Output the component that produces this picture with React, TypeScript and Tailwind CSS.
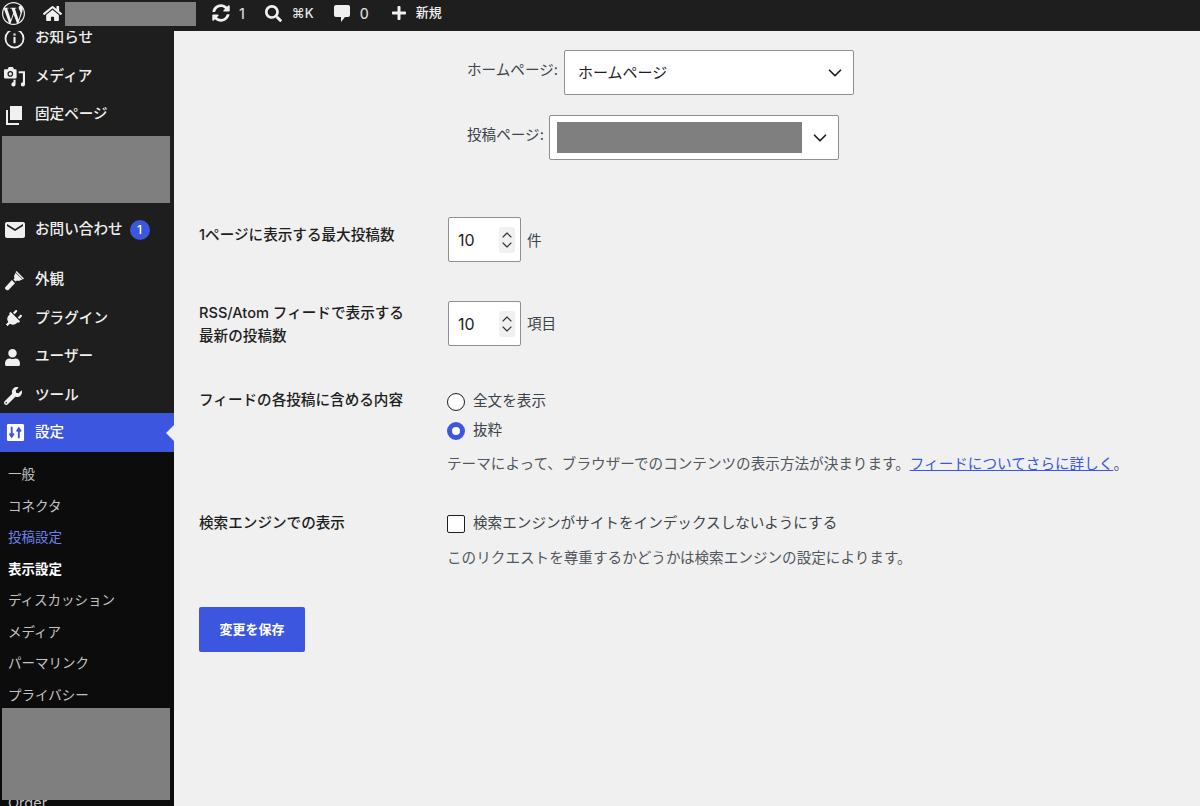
import { FC, ReactNode } from "react";
import { ChevronDown, ChevronUp } from "lucide-react";
import { FaHome, FaPlug, FaPlus, FaSearch, FaSyncAlt, FaUser, FaWrench } from "react-icons/fa";
import { MdEmail } from "react-icons/md";
import { SiWordpress } from "react-icons/si";

const font = "font-['Inter','Noto_Sans_CJK_JP',sans-serif]";

const InfoIcon = () => (
    <svg viewBox="0 0 20 20" className="w-[21px] h-[21px]" fill="none">
        <circle cx="10" cy="10" r="8.6" stroke="currentColor" strokeWidth="1.7" />
        <rect x="9" y="8.5" width="2" height="6" fill="currentColor" />
        <rect x="9" y="5.2" width="2" height="2" fill="currentColor" />
    </svg>
);

const MediaIcon = () => (
    <svg viewBox="0 0 20 20" className="w-[21px] h-[21px]" fill="currentColor">
        <path d="M1 3h2.5l1-2h4l1 2H11a1 1 0 0 1 1 1v7a1 1 0 0 1-1 1H1a1 1 0 0 1-1-1V4a1 1 0 0 1 1-1z" />
        <circle cx="6" cy="7.5" r="2.7" fill="#1e1e1e" />
        <circle cx="6" cy="7.5" r="1.5" />
        <path d="M14 5h6v12.5a2 2 0 1 1-2-2V7h-4V5z" />
        <path d="M9 13h2v4.5a2 2 0 1 1-2-2V13z" />
    </svg>
);

const PagesIcon = () => (
    <svg viewBox="0 0 20 20" className="w-[20px] h-[20px]" fill="currentColor">
        <path d="M6 1h12v14H6z" />
        <path d="M2 5h2v13h11v2H2z" />
    </svg>
);

const BrushIcon = () => (
    <svg viewBox="0 0 20 20" className="w-[21px] h-[21px]" fill="currentColor">
        <path d="M11 2.5 17.5 9l-3.5 1.5-1.5-.5-1.5 1-2-2 1-1.5-.5-1.5z" />
        <path d="M12 1l7 7-1 1-7-7z" />
        <path d="M7.5 9.5l3 3L4 19.3a1.5 1.5 0 0 1-1.2-.1L1.2 18a1.5 1.5 0 0 1-.2-1.3z" />
    </svg>
);

const SettingsIcon = () => (
    <svg viewBox="0 0 20 20" className="w-[19px] h-[19px]">
        <rect x="1" y="1" width="18" height="18" rx="1.5" fill="currentColor" />
        <path d="M6 4v9M3.8 11 6 14.5 8.2 11" stroke="#3c56e0" strokeWidth="2" fill="none" />
        <path d="M13.5 16V7M11.3 9 13.5 5.5 15.7 9" stroke="#3c56e0" strokeWidth="2" fill="none" />
    </svg>
);

const CommentIcon = () => (
    <svg viewBox="0 0 16 18" className="ml-[20px] mt-[5px] w-[16px] h-[18px]" fill="currentColor">
        <path d="M2 0h12a2 2 0 0 1 2 2v8a2 2 0 0 1-2 2h-3l-4 5v-5H2a2 2 0 0 1-2-2V2a2 2 0 0 1 2-2z" />
    </svg>
);

const Item: FC<{ icon: ReactNode; label: string; badge?: boolean }> = ({ icon, label, badge }) => (
    <div className="h-[38.5px] flex items-center text-[14.6px] font-medium text-[#f0f0f0]">
        <span className="w-[35px] pl-[4px] flex items-center shrink-0">{icon}</span>
        <span>{label}</span>
        {badge && (
            <span className="ml-[7px] w-[20px] h-[20px] rounded-full bg-[#3c56e0] text-white text-[12px] flex items-center justify-center">
                1
            </span>
        )}
    </div>
);

const SubItem: FC<{ label: string; className?: string }> = ({ label, className }) => (
    <div className={`h-[31.5px] pl-[8px] flex items-center text-[13.5px] ${className ?? "text-[#c4c4c4]"}`}>{label}</div>
);

const NumberBox: FC = () => (
    <div className="w-[73px] h-[45px] bg-white border border-[#8f8f8f] rounded-[2px] flex items-center justify-between pl-[9px] pr-[5px] text-[16px] text-[#1e1e1e]">
        <span>10</span>
        <span className="flex flex-col items-center bg-[#f0f0f0] rounded-[3px] text-[#333]">
            <ChevronUp size={16} strokeWidth={1.7} className="-mb-[3px]" />
            <ChevronDown size={16} strokeWidth={1.7} className="-mt-[3px]" />
        </span>
    </div>
);

const App: FC = () => {
    return (
        <div className={`h-[806px] w-[1200px] overflow-hidden flex flex-col bg-[#f0f0f0] ${font}`}>
            {/* admin bar */}
            <header className="h-[31px] shrink-0 bg-[#1e1e1e] text-[#f0f0f0] flex items-start text-[13px] font-medium">
                <SiWordpress size={23} className="ml-[2px] mt-[2px]" />
                <FaHome size={19} className="ml-[18px] mt-[4px]" />
                <div className="ml-[3px] mt-[2px] w-[131px] h-[24px] bg-[#7f7f7f]" />
                <FaSyncAlt size={18} className="ml-[16px] mt-[4px]" />
                <span className="ml-[9px] mt-[3px] text-[14px] text-[#d8d8d8]">1</span>
                <FaSearch size={17} className="ml-[20px] mt-[5px]" />
                <span className="ml-[10px] mt-[4px] text-[13px] text-[#e8e8e8]">⌘K</span>
                <CommentIcon />
                <span className="ml-[10px] mt-[3px] text-[14px] text-[#d8d8d8]">0</span>
                <FaPlus size={16} className="ml-[22px] mt-[5px]" />
                <span className="ml-[9px] mt-[3px]">新規</span>
            </header>

            <div className="flex flex-1 min-h-0">
                {/* sidebar */}
                <aside className="w-[174px] shrink-0 bg-[#1e1e1e] overflow-hidden">
                    <div className="-mt-[12px]">
                        <Item icon={<InfoIcon />} label="お知らせ" />
                        <Item icon={<MediaIcon />} label="メディア" />
                        <Item icon={<PagesIcon />} label="固定ページ" />
                        <div className="ml-[2px] mt-[1px] w-[168px] h-[67px] bg-[#7f7f7f]" />
                        <div className="mt-[8px]">
                            <Item icon={<MdEmail size={24} className="-ml-[1px]" />} label="お問い合わせ" badge />
                        </div>
                        <div className="mt-[12px]">
                            <Item icon={<BrushIcon />} label="外観" />
                            <Item icon={<FaPlug size={18} className="rotate-45" />} label="プラグイン" />
                            <Item icon={<FaUser size={17} />} label="ユーザー" />
                            <Item icon={<FaWrench size={18} />} label="ツール" />
                        </div>
                        <div className="relative -mt-[2px] h-[39px] bg-[#3c56e0] text-white flex items-center text-[14.6px] font-medium">
                            <span className="w-[35px] pl-[6px] flex items-center">
                                <SettingsIcon />
                            </span>
                            <span>設定</span>
                            <span className="absolute right-0 top-[12px] border-y-[8px] border-r-[8px] border-y-transparent border-r-[#f0f0f0]" />
                        </div>
                        <div className="bg-[#0c0c0c] pt-[6.5px] pb-[20px]">
                            <SubItem label="一般" />
                            <SubItem label="コネクタ" />
                            <SubItem label="投稿設定" className="text-[#6f82e8]" />
                            <SubItem label="表示設定" className="text-white font-semibold" />
                            <SubItem label="ディスカッション" />
                            <SubItem label="メディア" />
                            <SubItem label="パーマリンク" />
                            <SubItem label="プライバシー" />
                            <div className="relative z-10 ml-[2px] -mt-[3px] w-[168px] h-[92px] bg-[#7f7f7f]" />
                            <SubItem label="Order" className="text-[#c4c4c4] text-[14.5px] -mt-[12px]" />
                        </div>
                    </div>
                </aside>

                {/* settings form */}
                <main className="flex-1 pl-[25px] pt-[19px] text-[14.6px] text-[#1e1e1e]">
                    <div className="ml-[268px] flex items-center h-[45px]">
                        <span className="text-[#3c434a] mr-[6px] -mt-[3px]">ホームページ:</span>
                        <div className="w-[290px] h-[45px] bg-white border border-[#8f8f8f] rounded-[2px] flex items-center justify-between pl-[13px] pr-[7px] text-[15px]">
                            <span className="mt-[1px]">ホームページ</span>
                            <ChevronDown size={22} strokeWidth={1.9} />
                        </div>
                    </div>
                    <div className="ml-[268px] mt-[20px] flex items-center h-[45px]">
                        <span className="text-[#3c434a] mr-[5px] -mt-[3px]">投稿ページ:</span>
                        <div className="w-[290px] h-[45px] bg-white border border-[#8f8f8f] rounded-[2px] flex items-center justify-between pl-[7px] pr-[7px]">
                            <div className="w-[245px] h-[31px] bg-[#7f7f7f]" />
                            <ChevronDown size={22} strokeWidth={1.9} />
                        </div>
                    </div>

                    <div className="mt-[57px] flex h-[46px]">
                        <div className="w-[249px] pt-[8px] font-medium">1ページに表示する最大投稿数</div>
                        <NumberBox />
                        <span className="ml-[6px] mt-[14px] text-[#3c434a]">件</span>
                    </div>

                    <div className="mt-[38px] flex h-[46px]">
                        <div className="w-[249px] font-medium leading-[23px] pt-[1px]">
                            RSS/Atom フィードで表示する
                            <br />
                            最新の投稿数
                        </div>
                        <NumberBox />
                        <span className="ml-[6px] mt-[13px] text-[#3c434a]">項目</span>
                    </div>

                    <div className="mt-[44px] flex">
                        <div className="w-[248px] -mt-[1px] font-medium">フィードの各投稿に含める内容</div>
                        <div>
                            <label className="flex items-center h-[22px] text-[#3c434a]">
                                <span className="w-[18px] h-[18px] rounded-full bg-white border border-[#1e1e1e] mr-[8px]" />
                                全文を表示
                            </label>
                            <label className="flex items-center h-[22px] mt-[7px] text-[#3c434a]">
                                <span className="w-[18px] h-[18px] rounded-full bg-white border-[5px] border-[#3c56e0] mr-[8px]" />
                                抜粋
                            </label>
                            <p className="mt-[12px] text-[#50575e] whitespace-nowrap">
                                テーマによって、ブラウザーでのコンテンツの表示方法が決まります。
                                <a className="text-[#3c56e0] underline">フィードについてさらに詳しく</a>。
                            </p>
                        </div>
                    </div>

                    <div className="mt-[37px] flex">
                        <div className="w-[248px] font-medium">検索エンジンでの表示</div>
                        <div>
                            <label className="flex items-center h-[22px] text-[#3c434a]">
                                <span className="w-[18px] h-[18px] rounded-[2px] bg-white border border-[#1e1e1e] mr-[8px]" />
                                検索エンジンがサイトをインデックスしないようにする
                            </label>
                            <p className="mt-[13px] text-[#50575e]">このリクエストを尊重するかどうかは検索エンジンの設定によります。</p>
                        </div>
                    </div>

                    <button className="mt-[37px] w-[106px] h-[45px] bg-[#3c56e0] text-white text-[13px] font-semibold rounded-[2px]">
                        変更を保存
                    </button>
                </main>
            </div>
        </div>
    );
};

export default App;
